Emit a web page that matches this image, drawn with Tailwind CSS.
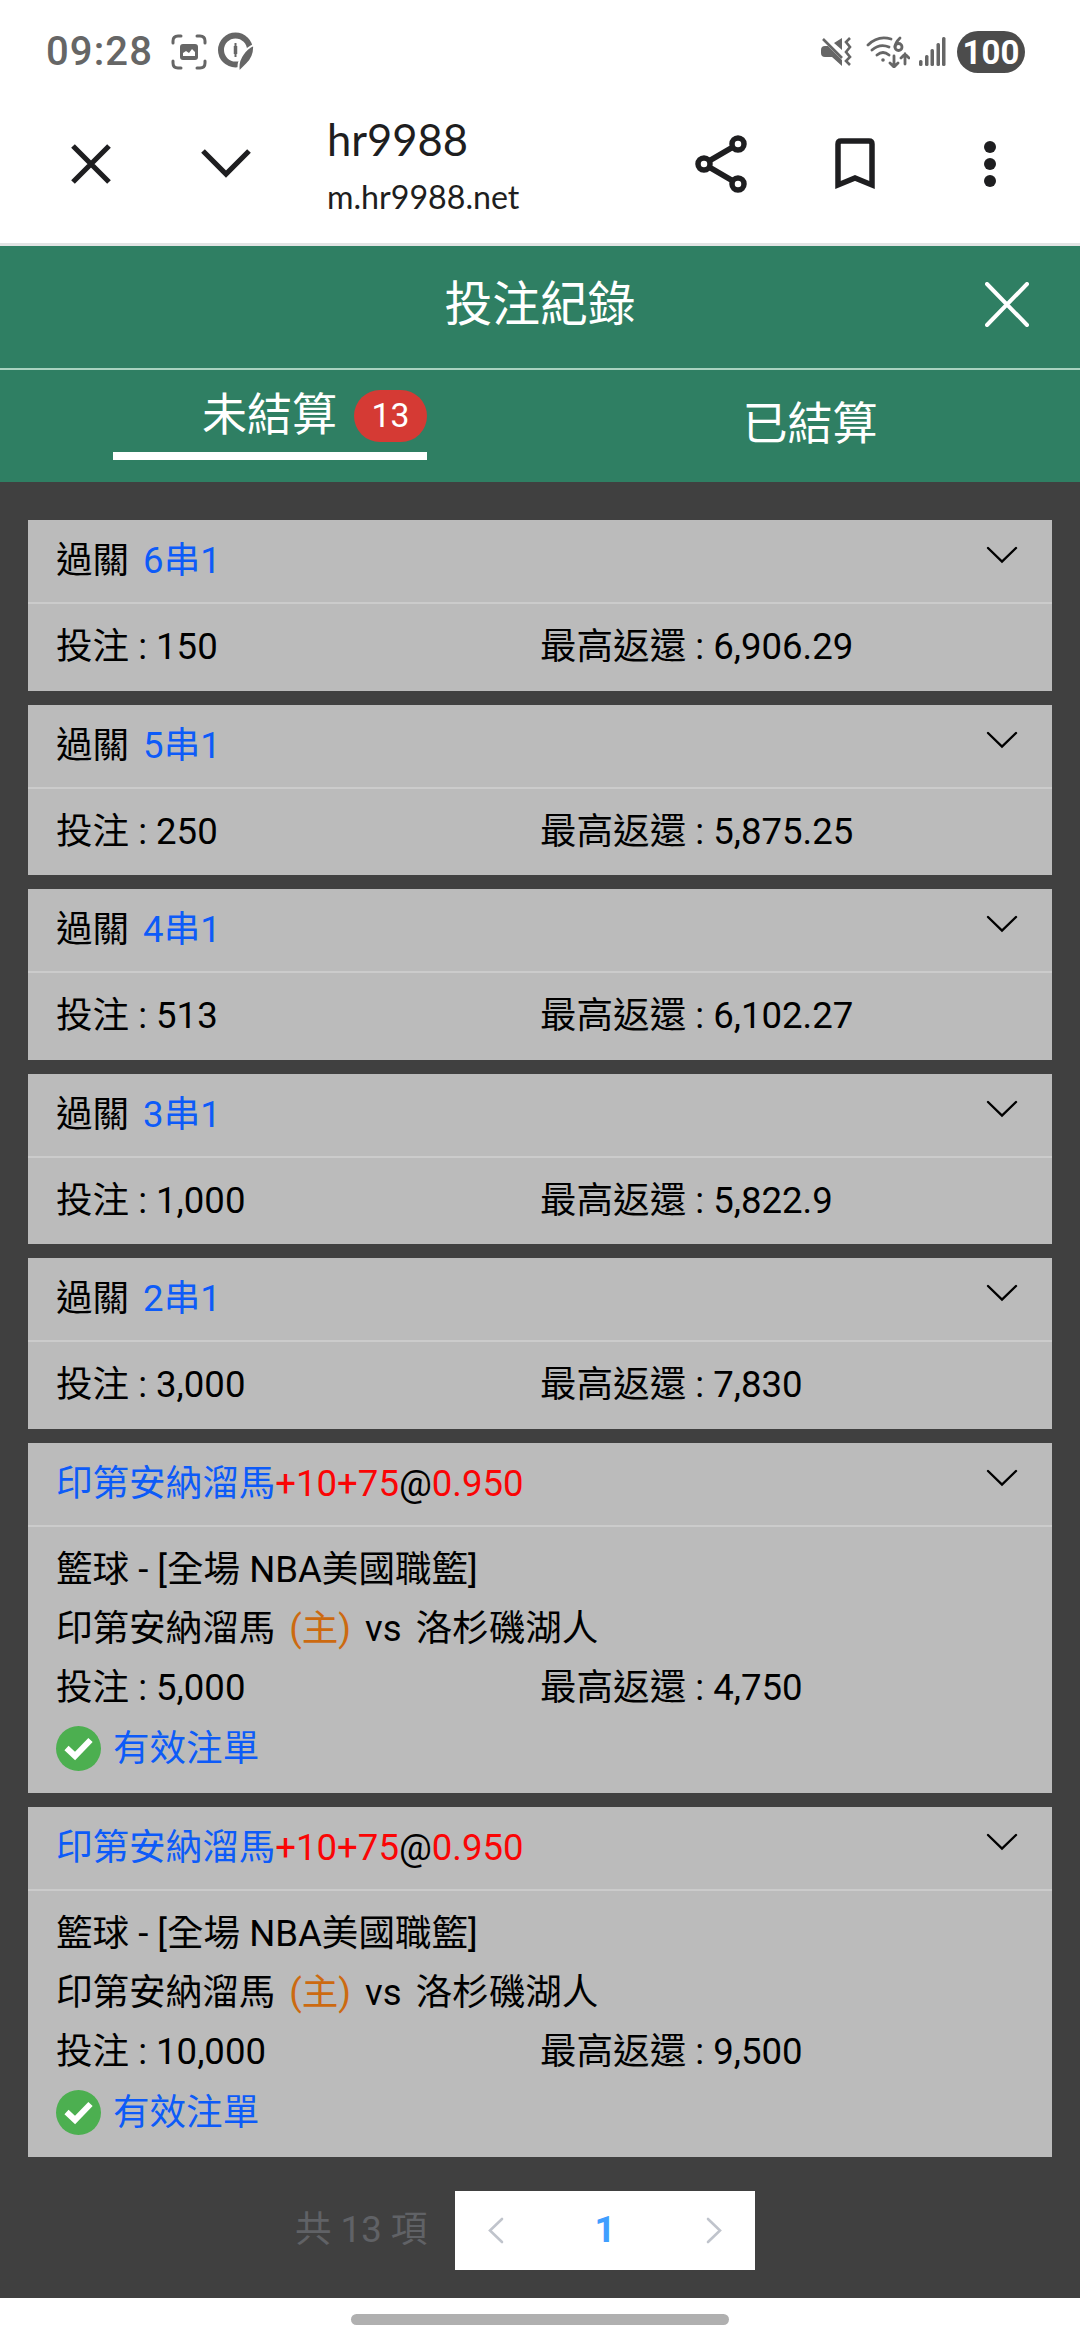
<!DOCTYPE html>
<html lang="zh-Hant">
<head>
<meta charset="utf-8">
<title>投注紀錄</title>
<script src="https://cdn.jsdelivr.net/npm/@tailwindcss/browser@4"></script>
</head>
<body class="w-[1080px] h-[2340px] overflow-hidden bg-white flex flex-col font-[Roboto,'Noto_Sans_CJK_TC',sans-serif] text-black">

<!-- Status bar -->
<header class="h-[102px] shrink-0 flex items-center pt-px px-[46px] text-[#666]">
  <div class="text-[40px] leading-[48px] font-medium tracking-[1.1px] w-[125px] pt-px whitespace-nowrap">09:28</div>
  <svg class="w-9 h-9" viewBox="0 0 36 36" fill="none" stroke="currentColor" stroke-width="3" stroke-linecap="round"><path d="M2 9V7Q2 2 7 2h3M26 2h3q5 0 5 5v2M34 27v2q0 5-5 5h-3M10 34H7q-5 0-5-5v-2"/><rect x="9" y="10" width="18" height="16" rx="3" fill="currentColor" stroke="none"/><path d="M12 22v-3l3-2 3 2 3-4 3 3v4z" fill="#fff" stroke="none"/></svg>
  <svg class="ml-[11px] w-9 h-10" viewBox="0 0 36 40"><circle cx="17.500" cy="18" r="14.500" fill="none" stroke="currentColor" stroke-width="6"/><path d="M36 13Q37 24 29 32L21 40Q19 30 25 22Q29 16 36 13Z" fill="currentColor" stroke="#fff" stroke-width="2"/><path d="M17.500 11v14" stroke="currentColor" stroke-width="2"/><path d="M17.500 14v8" stroke="currentColor" stroke-width="3.500"/></svg>
  <div class="ml-auto mr-[9px] flex items-center">
    <svg class="w-[31px] h-[30px]" viewBox="0 0 31 30" fill="none" stroke="currentColor" stroke-width="2.600"><path d="M0 13q0-4 4-4h3l14 14v6L11 20H4q-4 0-4-4zM13 6l8-5v12z" fill="currentColor" stroke="none"/><path d="M2 2l19 19M29 1l-4 4 4 5-4 5 4 5-4 4 4 4"/></svg>
    <svg class="ml-[14px] w-11 h-8" viewBox="0 0 44 32" fill="none" stroke="currentColor" stroke-width="2.800" stroke-linecap="round"><path d="M2 9Q12-1 25 3M6 14q8-7 17-3M11 19q6-5 12 0"/><circle cx="17" cy="24" r="1.800" fill="currentColor" stroke="none"/><path d="M34 2q-5 5-5 9"/><circle cx="32.500" cy="11" r="3.500"/><path d="M28 20v11m-4-4 4 4 4-4M39 28V18m-4 4 4-4 4 4"/></svg>
    <svg class="ml-[9px] w-[27px] h-[30px]" viewBox="0 0 27 30" fill="currentColor"><rect y="23" width="3.500" height="6" rx="1.500"/><rect x="6" y="18" width="3.500" height="11" rx="1.500"/><rect x="11.500" y="12" width="3.500" height="17" rx="1.500"/><rect x="17.500" y="6" width="3.500" height="23" rx="1.500"/><rect x="23" width="3.500" height="29" rx="1.500"/></svg>
    <div class="ml-[11px] w-[68px] h-[42px] rounded-full bg-[#4c4c4c] text-white text-[33px] font-bold leading-[43px] text-center">100</div>
  </div>
</header>

<!-- Browser toolbar -->
<nav class="h-[144px] shrink-0 border-b-[3px] border-[#e2e4e4] flex items-start text-[#1e1e20]">
  <svg class="ml-[71px] mt-[42px] w-10 h-10" viewBox="0 0 40 40" stroke="currentColor" stroke-width="5.200"><path d="M2 2l36 36M38 2 2 38"/></svg>
  <svg class="ml-[90px] mt-[47px] w-[50px] h-[31px]" viewBox="0 0 50 31" fill="none" stroke="currentColor" stroke-width="5.200"><path d="M2 2l23 23L48 2"/></svg>
  <div class="ml-[76px] mt-[10px] w-[220px] font-[Lato] text-[#1e1e20]">
    <div class="text-[43.500px] leading-[54px]">hr9988</div>
    <div class="text-[32.200px] leading-[62px] whitespace-nowrap">m.hr9988.net</div>
  </div>
  <svg class="ml-[148px] mt-[33px] w-[52px] h-[58px]" viewBox="0 0 52 58" fill="none" stroke="currentColor" stroke-width="5.500"><circle cx="9" cy="29" r="6"/><circle cx="43" cy="9" r="6"/><circle cx="43" cy="49" r="6"/><path d="M14 26l24-14M14 32l24 14"/></svg>
  <svg class="ml-[88px] mt-[36px] w-10 h-[52px]" viewBox="0 0 40 52" fill="none" stroke="currentColor" stroke-width="5.500"><path d="M3 47V6q0-3 3-3h28q3 0 3 3v41l-17-7z"/></svg>
  <svg class="ml-[109px] mt-[39px] w-3 h-[46px]" viewBox="0 0 12 46" fill="currentColor"><circle cx="6" cy="6" r="6"/><circle cx="6" cy="23" r="6"/><circle cx="6" cy="40" r="6"/></svg>
</nav>

<!-- Page title -->
<div class="h-[124px] shrink-0 bg-[#2f7f63] border-b-2 border-[#a9d3c0] grid grid-cols-[1fr_auto_1fr] items-start text-white">
  <h1 class="col-start-2 mt-[25px] text-[47.800px] leading-[68px]">投注紀錄</h1>
  <svg class="justify-self-end mr-[51px] mt-[36px] w-[44px] h-[45px]" viewBox="0 0 44 45" stroke="currentColor" stroke-width="4" stroke-linecap="round"><path d="M2 2l40 41M42 2 2 43"/></svg>
</div>

<!-- Tabs -->
<div class="h-[112px] shrink-0 bg-[#2f7f63] grid grid-cols-2 text-white text-[45px] leading-[64px]">
  <div class="relative mx-auto mt-[12px] w-[314px] h-[78px] border-b-8 border-white flex">
    <span class="ml-[89px] mt-0.5">未結算</span>
    <span class="absolute right-0 top-2 w-[73px] h-[52px] rounded-[26px] bg-[#d53a34] text-center text-[33.750px] leading-[52px]">13</span>
  </div>
  <div class="text-center mt-[23px]">已結算</div>
</div>

<!-- Bet list -->
<main class="h-[1816px] shrink-0 bg-[#404040] pt-[38px] px-7 text-[36.560px]">
  <div id="list" class="flex flex-col gap-[14px]"></div>
  <div class="flex items-center mt-[34px] ml-[267px] h-[79px]">
    <span class="text-[#606266] w-[160px] whitespace-nowrap">共 13 項</span>
    <div class="w-[300px] h-[79px] bg-white flex items-center justify-between px-[33px] text-[#c0c4cc]">
      <svg class="w-4 h-[27px]" viewBox="0 0 16 27" fill="none" stroke="currentColor" stroke-width="2.600" stroke-linecap="round"><path d="M14 2 2 13.500 14 25"/></svg>
      <span class="text-[#409eff] font-bold">1</span>
      <svg class="w-4 h-[27px]" viewBox="0 0 16 27" fill="none" stroke="currentColor" stroke-width="2.600" stroke-linecap="round"><path d="M2 2l12 11.500L2 25"/></svg>
    </div>
  </div>
</main>

<!-- Gesture bar -->
<footer class="grow bg-white pt-4"><div class="mx-auto w-[378px] h-[11px] rounded-full bg-[#b0b0b0]"></div></footer>

<script>
const arrow = '<svg class="mr-[34px] mt-[26px] w-8 h-[18px]" viewBox="0 0 32 18" fill="none" stroke="#000" stroke-width="2.400" stroke-linecap="round"><path d="M2 2l14 13.500L30 2"/></svg>';
const check = '<svg class="w-[45px] h-[45px] mr-[12px]" viewBox="0 0 45 45"><circle cx="22.500" cy="22.500" r="22.500" fill="#4caf50"/><path d="M10.500 22l8.500 8L34.500 14" fill="none" stroke="#fff" stroke-width="6"/></svg>';
const head = t => `<div class="h-[84px] border-b-2 border-[#cbcbcb] flex justify-between items-start pl-7"><div class="mt-[14px] leading-[54px] whitespace-pre">${t}</div>${arrow}</div>`;
const amounts = (a, b) => `<div class="grid grid-cols-[484px_1fr]"><span>投注 : ${a}</span><span>最高返還 : ${b}</span></div>`;
const parlays = [[6,'150','6,906.29'],[5,'250','5,875.25'],[4,'513','6,102.27'],[3,'1,000','5,822.9'],[2,'3,000','7,830']];
const singles = [['5,000','4,750'],['10,000','9,500']];
document.getElementById('list').innerHTML =
  parlays.map(([n,a,b]) => `<section class="h-[170.600px] bg-[#bbb]">${head(`過關<span class="text-[#0d5bf8] ml-[14px]">${n}串1</span>`)}<div class="pl-7 pt-[13px] leading-[59px]">${amounts(a,b)}</div></section>`).join('') +
  singles.map(([a,b]) => `<section class="h-[350px] bg-[#bbb]">${head('<span class="text-[#0d5bf8]">印第安納溜馬</span><span class="text-[#fa0505]">+10+75</span>@<span class="text-[#fa0505]">0.950</span>')}<div class="pl-7 pt-[13px] leading-[59px]"><div>籃球 - [全場 NBA美國職籃]</div><div class="flex"><span>印第安納溜馬</span><span class="text-[#cc6a10] ml-[14px] mr-[14px]">(主)</span><span>vs</span><span class="ml-[14px]">洛杉磯湖人</span></div>${amounts(a,b)}<div class="flex items-center h-[63px] text-[#0d5bf8]">${check}<span>有效注單</span></div></div></section>`).join('');
</script>
</body>
</html>
